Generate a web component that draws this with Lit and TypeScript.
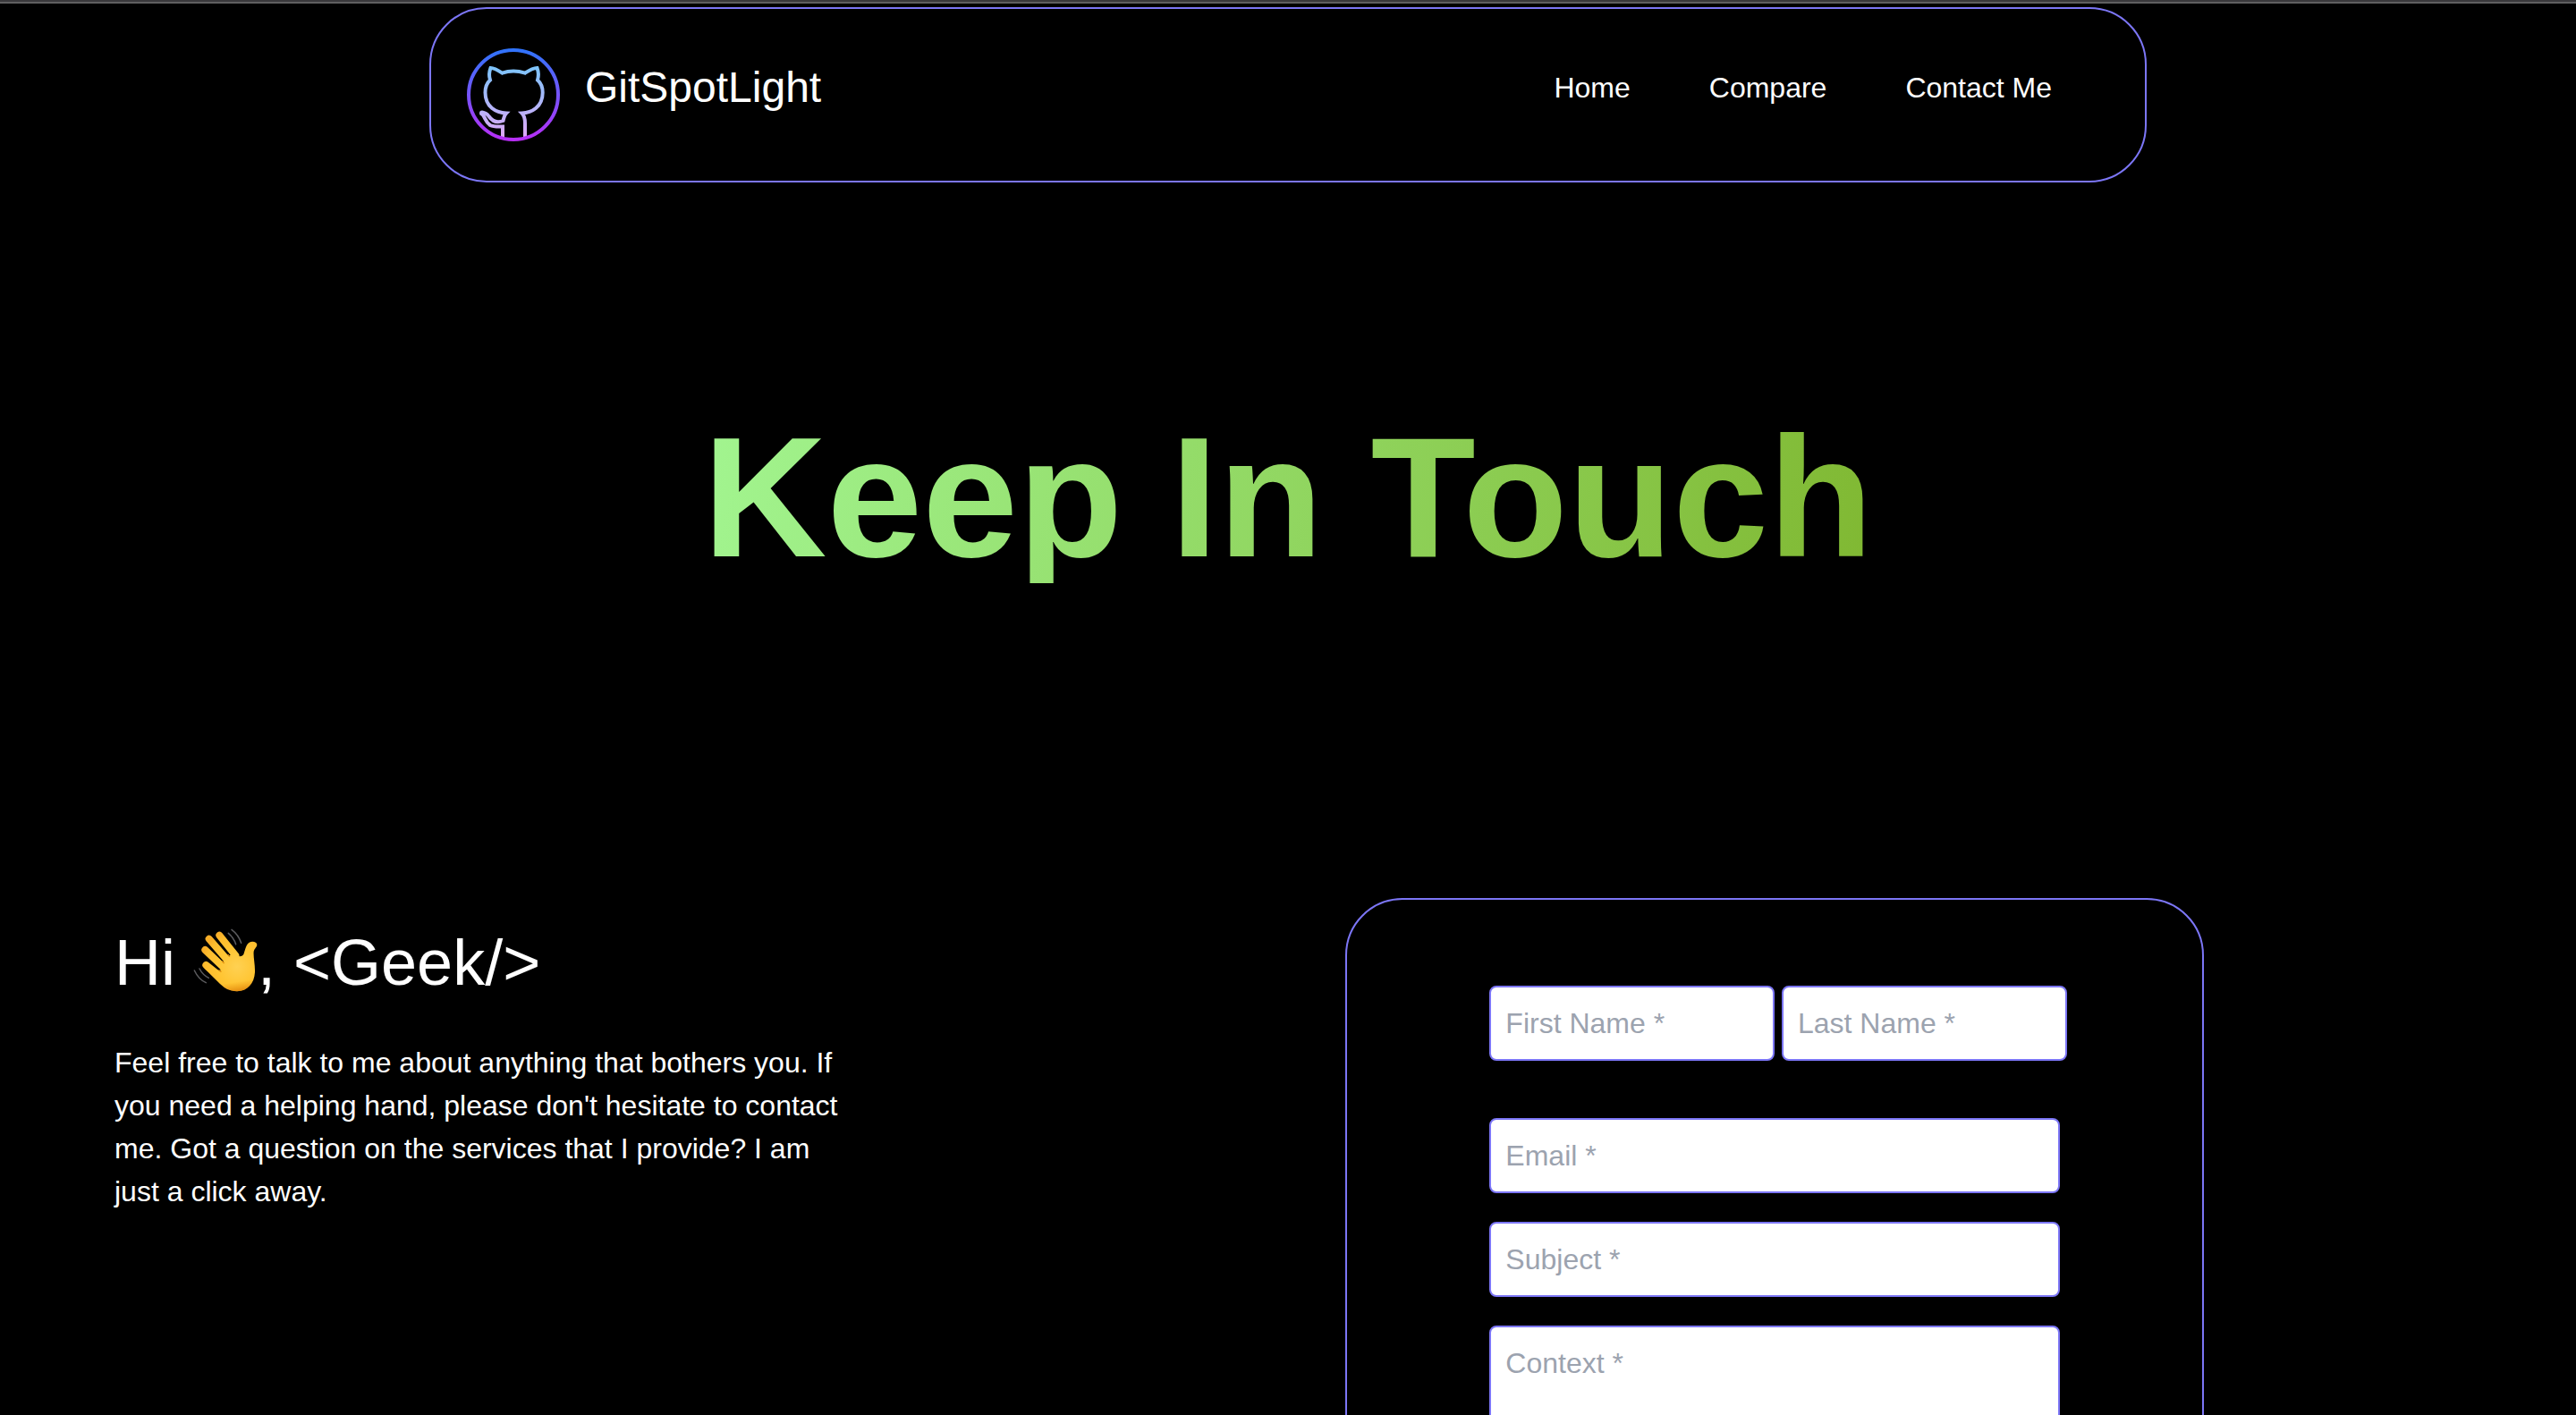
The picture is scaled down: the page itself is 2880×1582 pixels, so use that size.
import { LitElement, html, css, svg } from "lit";
import { customElement } from "lit/decorators.js";

const logo = svg`<svg class="logo" viewBox="0 0 104 104" aria-hidden="true">
    <defs>
      <linearGradient id="ring" x1="0" y1="0" x2="0" y2="104" gradientUnits="userSpaceOnUse">
        <stop offset="0" stop-color="#2e74fb" />
        <stop offset="0.45" stop-color="#6f58fa" />
        <stop offset="1" stop-color="#b92df6" />
      </linearGradient>
      <linearGradient id="cat" x1="0" y1="20" x2="0" y2="100" gradientUnits="userSpaceOnUse">
        <stop offset="0" stop-color="#7cc4fb" />
        <stop offset="1" stop-color="#dfa8f8" />
      </linearGradient>
      <clipPath id="disc"><circle cx="52" cy="52" r="49" /></clipPath>
    </defs>
    <g clip-path="url(#disc)" fill="none" stroke="url(#cat)" stroke-width="4">
      <path d="M16 72 C20 71.500 22.500 73 24.500 76 C28 81 33 84 40.500 81 C41.500 77 41.500 75 44 72.500 C33 72 20.500 66 20.500 49.500 C20.500 44 22 39 26 35.500 C24.500 31 25 26 26.500 22 C31 22 35.500 25 39.500 27.700 C47 25 57 25 65 27.700 C69 25 73.500 22 78.500 22 C80 26 80.300 31 79 35.500 C83 39 84.700 44 84.700 49.500 C84.700 66 72 72 61.500 72.500 C64 75 65 79 65 84 V101" />
      <path d="M16 72 C21 77 20 82 26 86 C30 88 35 87.500 40 87.500 V101" />
    </g>
    <circle cx="17" cy="72.500" r="3" fill="url(#cat)" />
    <circle cx="52" cy="52" r="50" fill="none" stroke="url(#ring)" stroke-width="4" />
  </svg>`;

const wave = svg`<svg class="wave" viewBox="48 34 216 216" role="img" aria-label="waving hand">
    <defs>
      <radialGradient id="skin" cx="195" cy="165" r="125" gradientUnits="userSpaceOnUse">
        <stop offset="0" stop-color="#ffd152" />
        <stop offset="0.5" stop-color="#ffc533" />
        <stop offset="0.85" stop-color="#fdbc2e" />
        <stop offset="1" stop-color="#f8ae28" />
      </radialGradient>
      <linearGradient id="shade" x1="210" y1="175" x2="222" y2="250" gradientUnits="userSpaceOnUse">
        <stop offset="0.5" stop-color="#e58a0c" stop-opacity="0" />
        <stop offset="1" stop-color="#d97a05" stop-opacity="0.9" />
      </linearGradient>
    </defs>
    <g fill="none" stroke="url(#skin)" stroke-width="24" stroke-linecap="round">
      <path d="M136 60 L190 128" />
      <path d="M101 72 L165 146" />
      <path d="M88 109 L150 168" />
      <path d="M91 160 L150 206" />
    </g>
    <path fill="url(#skin)" d="M140 168 L150 146 L182 118 C192 130 208 136 217 124 C223 108 225 90 236 84 C248 78 262 83 262 92 C262 99 254 104 251 114 C249 132 256 158 255 184 C253 222 229 247 195 248 C171 248 154 238 138 223 L84 170 L138 186 Z" />
    <path fill="url(#shade)" d="M251 114 C249 132 256 158 255 184 C253 222 229 247 195 248 C171 248 154 238 138 223 L84 170 L150 190 L220 170 Z" />
    <g fill="none" stroke="#e0900f" stroke-width="4" stroke-linecap="round">
      <path d="M165 125 L170 131" />
      <path d="M145 147 L151 153" />
      <path d="M135 177 L141 182" />
    </g>
    <g fill="none" stroke="#5c5c5f" stroke-width="4.500" stroke-linecap="round">
      <path d="M177 41 Q200 58 209 86" />
      <path d="M166 53 Q184 68 191 90" />
      <path d="M52 178 Q66 208 91 219" />
      <path d="M69 172 Q80 193 100 203" />
    </g>
  </svg>`;

@customElement("app-root")
export class AppRoot extends LitElement {
  static styles = css`
    :host {
      --line: #7c76f6;
      display: block;
      height: 100vh;
      overflow-y: auto;
      scrollbar-width: none;
      background: #000;
      color: #fff;
      font: 32px/48px "Liberation Sans", Helvetica, Arial, sans-serif;
    }
    * {
      box-sizing: border-box;
      margin: 0;
    }
    .edge {
      height: 4px;
      border-top: 2px solid #39383b;
      background: #5f5f60;
    }
    .header {
      display: flex;
      align-items: flex-start;
      justify-content: space-between;
      width: 66.6667%;
      margin: 4px auto 0;
      padding: 44px 104px 44px 40px;
      border: 2px solid var(--line);
      border-radius: 64px;
      line-height: 88px;
    }
    a {
      color: inherit;
      text-decoration: none;
    }
    .brand {
      display: flex;
      gap: 28px;
      font-size: 48px;
    }
    .logo {
      width: 104px;
      height: 104px;
    }
    .nav {
      display: flex;
      gap: 88px;
    }
    .hero {
      display: flex;
      justify-content: center;
      padding: 256px 0 352px;
    }
    .title {
      font-size: 192px;
      line-height: 192px;
      font-weight: 700;
      color: transparent;
      background: linear-gradient(100deg, #a2f590, #80b832);
      background-clip: text;
      -webkit-background-clip: text;
    }
    .contact {
      display: grid;
      grid-template-columns: 1fr 1fr;
    }
    .intro {
      display: flex;
      flex-direction: column;
      gap: 48px;
      padding: 32px 128px;
    }
    .greeting {
      font-size: 72px;
      line-height: 80px;
      font-weight: 400;
    }
    .wave {
      display: inline-block;
      width: 72px;
      height: 72px;
      vertical-align: -8px;
    }
    .message {
      max-width: 832px;
    }
    .card {
      width: 66.6667%;
      margin-left: 64px;
      padding: 96px 0;
      border: 2px solid var(--line);
      border-radius: 64px;
    }
    .form {
      display: flex;
      flex-direction: column;
      gap: 32px;
      width: 66.6667%;
      margin: 0 auto;
    }
    .names {
      display: grid;
      grid-template-columns: 1fr 1fr;
      gap: 8px;
      margin: 0 -8px 32px 0;
    }
    .field {
      display: block;
      width: 100%;
      min-width: 0;
      padding: 16px;
      border: 2px solid var(--line);
      border-radius: 8px;
      background: #fff;
      color: #111827;
      font: inherit;
      resize: none;
    }
    input.field {
      height: 84px;
    }
    .field::placeholder {
      color: #9ca3af;
      opacity: 1;
    }
  `;

  render() {
    return html`
      <div class="edge"></div>
      <header class="header">
        <a class="brand" href="#">${logo}<span>GitSpotLight</span></a>
        <nav class="nav">
          <a href="#home">Home</a>
          <a href="#compare">Compare</a>
          <a href="#contact">Contact Me</a>
        </nav>
      </header>
      <main>
        <div class="hero"><h1 class="title">Keep In Touch</h1></div>
        <section class="contact" id="contact">
          <div class="intro">
            <h2 class="greeting">Hi ${wave}, &lt;Geek/&gt;</h2>
            <p class="message">
              Feel free to talk to me about anything that bothers you. If you need a helping hand,
              please don't hesitate to contact me. Got a question on the services that I provide? I
              am just a click away.
            </p>
          </div>
          <div class="card">
            <form class="form">
              <div class="names">
                <input class="field" type="text" placeholder="First Name *" aria-label="First Name" required />
                <input class="field" type="text" placeholder="Last Name *" aria-label="Last Name" required />
              </div>
              <input class="field" type="email" placeholder="Email *" aria-label="Email" required />
              <input class="field" type="text" placeholder="Subject *" aria-label="Subject" required />
              <textarea class="field" rows="4" placeholder="Context *" aria-label="Context" required></textarea>
            </form>
          </div>
        </section>
      </main>
    `;
  }
}
